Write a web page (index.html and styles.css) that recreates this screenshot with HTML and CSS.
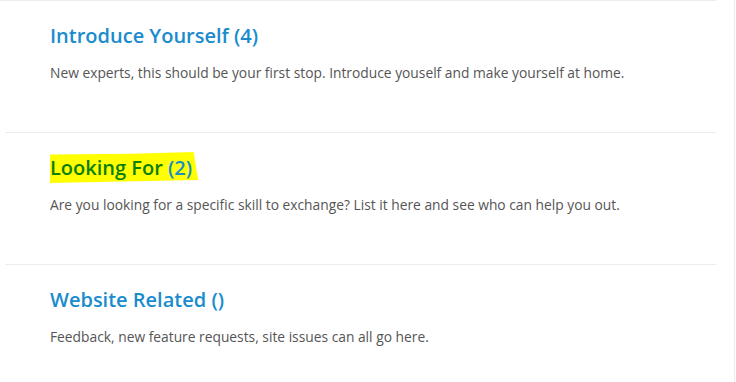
FILE: index.html
```html
<!DOCTYPE html>
<html lang="en">
<head>
    <meta charset="UTF-8">
    <title>Forums</title>
    <link rel="stylesheet" href="styles.css">
</head>
<body>

    <div class="page">
        <div class="topics">
            <div class="topic">
                <h2 class="topic-title"><a href="#">Introduce Yourself (4)</a></h2>
                <p class="topic-desc">New experts, this should be your first stop. Introduce youself and make yourself at home.</p>
            </div>
            <div class="topic">
                <h2 class="topic-title"><a href="#"><span class="marked"><span class="visited">Looking For</span> (2)</span></a></h2>
                <p class="topic-desc">Are you looking for a specific skill to exchange? List it here and see who can help you out.</p>
            </div>
            <div class="topic">
                <h2 class="topic-title"><a href="#">Website Related ()</a></h2>
                <p class="topic-desc">Feedback, new feature requests, site issues can all go here.</p>
            </div>
        </div>
    </div>

</body>
</html>
```

FILE: styles.css
```css
body {
    margin: 0;
    font-family: 'Open Sans', 'Noto Sans', sans-serif;
    background-color: #fff;
}

.page {
    width: 734px;
    min-height: 382px;
    border-right: 1px solid #ececec;
}

.topics {
    width: 716px;
    border-top: 1px solid #ececec;
}

.topic {
    height: 131px;
    margin-left: 5px;
    padding-left: 45px;
    box-sizing: border-box;
}

.topic + .topic {
    border-top: 1px solid #ececec;
    height: 132px;
}

.topic-title {
    margin: 0;
    padding-top: 22px;
    font-size: 20px;
    font-weight: 600;
    line-height: 26px;
}

.topic-title a {
    color: #1a8ccc;
    text-decoration: none;
}

.marked {
    background-color: #ffff00;
    padding: 2px 6px 2px 0;
    clip-path: polygon(0 8%, 55% 6%, 97% 0, 100% 90%, 40% 96%, 0 100%);
}

.visited {
    color: #0b7f0b;
}

.topic-desc {
    margin: 14px 0 0;
    font-size: 13.8px;
    line-height: 20px;
    color: #555;
}
```
